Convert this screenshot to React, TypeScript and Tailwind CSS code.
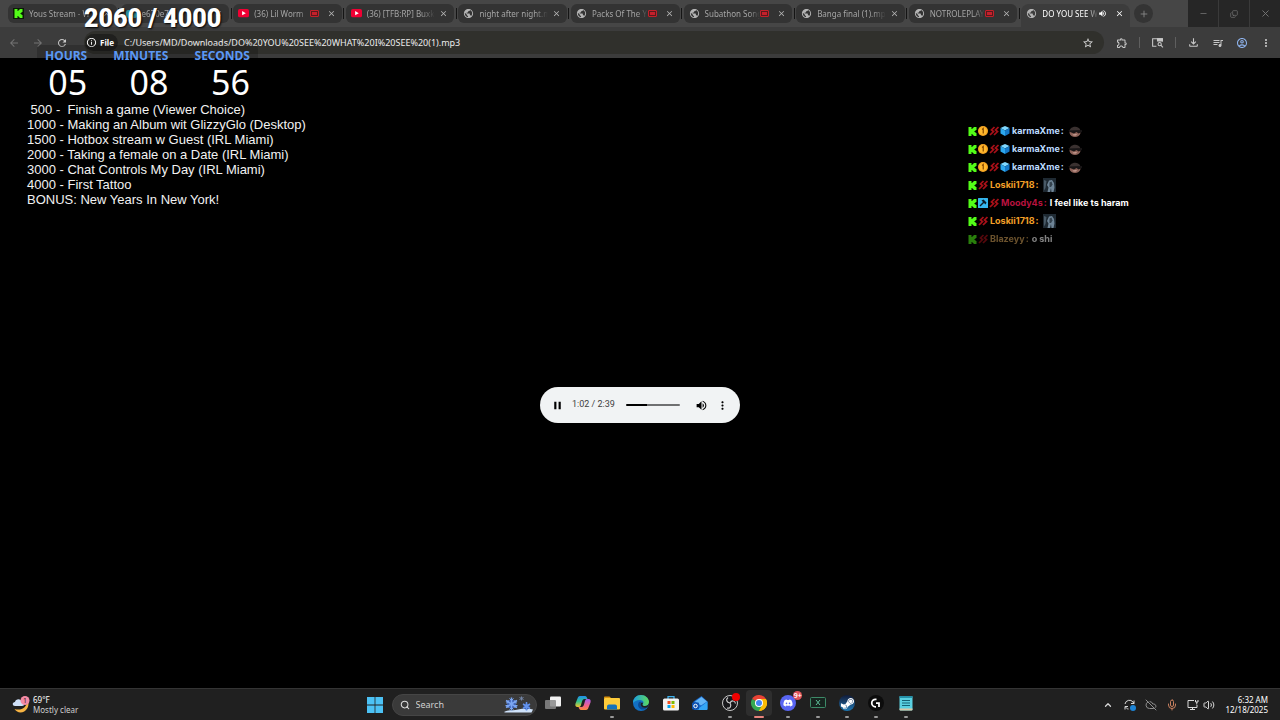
import React, { useState } from 'react';
import {
  MdArrowBack,
  MdArrowForward,
  MdClose,
  MdInfoOutline,
  MdMoreVert,
  MdOutlineAccountCircle,
  MdOutlineExtension,
  MdOutlineFileDownload,
  MdPause,
  MdPublic,
  MdQueueMusic,
  MdRefresh,
  MdStarBorder,
  MdVolumeUp,
} from 'react-icons/md';
import { FaDiscord, FaSteamSymbol } from 'react-icons/fa';
import { ChevronUp, CloudOff, Copy, Mic, Minus, Plus, Search, Volume2, X } from 'lucide-react';

type TabIcon = 'kick' | 'file' | 'youtube' | 'globe';

type Tab = {
  title: string;
  icon: TabIcon;
  live?: boolean;
  active?: boolean;
};

const tabs: Tab[] = [
  { title: 'Yous Stream - W', icon: 'kick' },
  { title: 'e670e7', icon: 'file' },
  { title: '(36) Lil Worm', icon: 'youtube', live: true },
  { title: '(36) [TFB:RP] Buxks', icon: 'youtube' },
  { title: 'night after night.m', icon: 'globe' },
  { title: 'Packs Of The Y', icon: 'globe', live: true },
  { title: 'Subathon Song', icon: 'globe', live: true },
  { title: 'Banga final (1).mp', icon: 'globe' },
  { title: 'NOTROLEPLAY', icon: 'globe', live: true },
  { title: 'DO YOU SEE W', icon: 'globe', active: true },
];

const goals = [
  '\u00a0500 -\u00a0 Finish a game (Viewer Choice)',
  '1000 - Making an Album wit GlizzyGlo (Desktop)',
  '1500 - Hotbox stream w Guest (IRL Miami)',
  '2000 - Taking a female on a Date (IRL Miami)',
  '3000 - Chat Controls My Day (IRL Miami)',
  '4000 - First Tattoo',
  'BONUS: New Years In New York!',
];

type Message = {
  user: string;
  color: string;
  badges: string[];
  text?: string;
  emote?: 'face' | 'statue';
  faded?: boolean;
};

const messages: Message[] = [
  { user: 'karmaXme', color: 'text-[#bcdcff]', badges: ['kick', 'coin', 'sub', 'cube'], emote: 'face' },
  { user: 'karmaXme', color: 'text-[#bcdcff]', badges: ['kick', 'coin', 'sub', 'cube'], emote: 'face' },
  { user: 'karmaXme', color: 'text-[#bcdcff]', badges: ['kick', 'coin', 'sub', 'cube'], emote: 'face' },
  { user: 'Loskii1718', color: 'text-[#f5a028]', badges: ['kick', 'sub'], emote: 'statue' },
  { user: 'Moody4s', color: 'text-[#b8123f]', badges: ['kick', 'mod', 'sub'], text: 'I feel like ts haram' },
  { user: 'Loskii1718', color: 'text-[#f5a028]', badges: ['kick', 'sub'], emote: 'statue' },
  { user: 'Blazeyy', color: 'text-[#d6a45a]', badges: ['kick', 'sub'], text: 'o shi', faded: true },
];

function KickLogo({ className }: { className?: string }) {
  return (
    <svg viewBox="0 0 24 24" className={className} fill="#53fc18">
      <path d="M1.333 0h8v5.333H12V2.667h2.667V0h8v8H20v2.667h-2.667v2.666H20V16h2.667v8h-8v-2.667H12v-2.666H9.333V24h-8Z" />
    </svg>
  );
}

function YoutubeLogo() {
  return (
    <svg viewBox="0 0 24 18" className="w-[11px] shrink-0">
      <rect width="24" height="18" rx="4" fill="#f00033" />
      <path d="M9 4.5v9l8-4.5z" fill="#fff" />
    </svg>
  );
}

function TabFavicon({ icon }: { icon: TabIcon }) {
  if (icon === 'kick') {
    return (
      <span className="flex size-[11px] shrink-0 items-center justify-center bg-[#0b1a06]">
        <KickLogo className="size-[9px]" />
      </span>
    );
  }
  if (icon === 'youtube') return <YoutubeLogo />;
  if (icon === 'file') return <span className="h-2 w-[11px] shrink-0 rounded-xs bg-[#2b8f9c]" />;
  return <MdPublic className="size-[11px] shrink-0 text-[#b5b5b5]" />;
}

function BrowserTab({ tab }: { tab: Tab }) {
  return (
    <div
      role="tab"
      aria-selected={!!tab.active}
      className={`flex min-w-0 flex-1 items-center pr-1.5 pl-[5px] ${
        tab.active ? 'h-[23px] rounded-t-lg bg-[#3c3c3c] pb-1' : 'h-[19px] rounded-md bg-[#333333]'
      }`}
    >
      <TabFavicon icon={tab.icon} />
      <span
        className={`ml-[5px] min-w-0 flex-1 overflow-hidden text-[8px] whitespace-nowrap [mask-image:linear-gradient(to_right,black_80%,transparent)] ${
          tab.active ? 'text-white' : 'text-[#a5a5a5]'
        }`}
      >
        {tab.title}
      </span>
      {tab.live && (
        <span className="mr-1 flex h-[7px] w-[9px] shrink-0 items-center justify-center rounded-[1px] border border-[#c4202b] bg-[#571a1d]">
          <span className="h-[3px] w-[5px] bg-[#c4202b]" />
        </span>
      )}
      {tab.active && <MdVolumeUp className="mr-1 size-[9px] shrink-0 text-white" />}
      <button type="button" aria-label="Close tab" className="ml-1 shrink-0">
        <MdClose className={`size-[9px] ${tab.active ? 'text-white' : 'text-[#b5b5b5]'}`} />
      </button>
    </div>
  );
}

function TabStrip() {
  return (
    <div className="flex h-[27px] bg-[#464646]">
      <div role="tablist" className="flex min-w-0 flex-1 items-start pt-1 pl-2">
        {tabs.map((tab, i) => (
          <React.Fragment key={tab.title}>
            {i > 0 && (
              <span className="flex h-[19px] w-1 shrink-0 items-center justify-center">
                <span className="h-[11px] w-px bg-[#151515]" />
              </span>
            )}
            <BrowserTab tab={tab} />
          </React.Fragment>
        ))}
      </div>
      <div className="w-[58px] shrink-0 pt-1 pl-1">
        <button
          type="button"
          aria-label="New tab"
          className="flex size-[19px] items-center justify-center rounded-full bg-[#343434] text-[#8c8c8c]"
        >
          <Plus className="size-[10px]" />
        </button>
      </div>
      <div className="flex shrink-0 gap-px bg-[#3a3a3a] text-[#777777]">
        <button type="button" aria-label="Minimize" className="flex w-[30px] items-center justify-center bg-[#262626]">
          <Minus className="size-[9px]" />
        </button>
        <button type="button" aria-label="Restore" className="flex w-[30px] items-center justify-center bg-[#262626]">
          <Copy className="size-2 -scale-x-100 rotate-180" />
        </button>
        <button type="button" aria-label="Close" className="flex w-[30px] items-center justify-center bg-[#262626]">
          <X className="size-[11px]" />
        </button>
      </div>
    </div>
  );
}

function Toolbar() {
  const [url, setUrl] = useState('C:/Users/MD/Downloads/DO%20YOU%20SEE%20WHAT%20I%20SEE%20(1).mp3');

  return (
    <div className="flex h-[31px] items-center bg-[#3c3c3c] pr-2 pl-2">
      <div className="flex w-[76px] shrink-0 items-center gap-3">
        <button type="button" aria-label="Back">
          <MdArrowBack className="size-3 text-[#727272]" />
        </button>
        <button type="button" aria-label="Forward">
          <MdArrowForward className="size-3 text-[#727272]" />
        </button>
        <button type="button" aria-label="Reload">
          <MdRefresh className="size-3 text-[#c9c9c9]" />
        </button>
      </div>
      <div className="flex h-[23px] min-w-0 flex-1 items-center rounded-full bg-[#30302c] pr-[10px] pl-px">
        <button
          type="button"
          className="flex h-[17px] shrink-0 items-center gap-[3px] rounded-full bg-[#20201e] pr-1 pl-px text-[8px] font-bold text-white"
        >
          <MdInfoOutline className="size-[11px]" />
          File
        </button>
        <input
          aria-label="Address"
          value={url}
          onChange={(e) => setUrl(e.target.value)}
          className="ml-1.5 min-w-0 flex-1 bg-transparent text-[9px] text-[#ececec] outline-none"
        />
        <button type="button" aria-label="Bookmark">
          <MdStarBorder className="size-3 text-[#d8d8d8]" />
        </button>
      </div>
      <div className="flex shrink-0 items-center pl-3 text-[#c8c8c8]">
        <button type="button" aria-label="Extensions">
          <MdOutlineExtension className="size-3" />
        </button>
        <span className="mx-[11px] h-[11px] w-px bg-[#5f5f5f]" />
        <button type="button" aria-label="Search this page">
          <svg viewBox="0 0 24 24" className="size-[13px]" fill="none" stroke="currentColor" strokeWidth="2">
            <path d="M10 19H3V5h18v5" />
            <path d="M12 5h9v4h-9z" fill="currentColor" />
            <circle cx="16" cy="15" r="3" />
            <path d="M18 17l4 4" />
          </svg>
        </button>
        <span className="mx-[11px] h-[11px] w-px bg-[#5f5f5f]" />
        <div className="flex items-center gap-3">
          <button type="button" aria-label="Downloads">
            <MdOutlineFileDownload className="size-[13px]" />
          </button>
          <button type="button" aria-label="Media controls">
            <MdQueueMusic className="size-3" />
          </button>
          <button type="button" aria-label="Profile">
            <MdOutlineAccountCircle className="size-3 text-[#8fb4ee]" />
          </button>
          <button type="button" aria-label="Menu">
            <MdMoreVert className="size-3" />
          </button>
        </div>
      </div>
    </div>
  );
}

function AudioPlayer() {
  const duration = 159;
  const [time, setTime] = useState(62);
  const percent = (time / duration) * 100;
  const format = (s: number) => `${Math.floor(s / 60)}:${String(s % 60).padStart(2, '0')}`;

  return (
    <div className="flex h-9 w-[200px] items-center rounded-full bg-[#f1f3f4] pr-[11px] pl-[11px] text-black">
      <button type="button" aria-label="Pause">
        <MdPause className="size-[13px]" />
      </button>
      <span className="ml-2 font-['Roboto',sans-serif] text-[9px] text-[#404040]">
        {format(time)} / {format(duration)}
      </span>
      <input
        type="range"
        aria-label="Seek"
        min={0}
        max={duration}
        value={time}
        onChange={(e) => setTime(Number(e.target.value))}
        style={{ background: `linear-gradient(to right, #000 ${percent}%, #6f7071 ${percent}%)` }}
        className="ml-[11px] h-[2px] min-w-0 flex-1 appearance-none rounded-full [&::-webkit-slider-thumb]:size-0 [&::-webkit-slider-thumb]:appearance-none"
      />
      <button type="button" aria-label="Mute" className="ml-[15px]">
        <MdVolumeUp className="size-[13px]" />
      </button>
      <button type="button" aria-label="More options" className="ml-2">
        <MdMoreVert className="size-[13px]" />
      </button>
    </div>
  );
}

function Countdown() {
  const parts = [
    { label: 'HOURS', value: '05' },
    { label: 'MINUTES', value: '08' },
    { label: 'SECONDS', value: '56' },
  ];

  return (
    <div className="absolute top-[45px] left-[37px] flex w-[221px] justify-between rounded-sm bg-black/20 px-2 font-['Noto_Sans',sans-serif]">
      {parts.map((part) => (
        <div key={part.label} className="flex flex-col items-end">
          <span className="text-[12px] leading-[22px] font-bold text-[#5b98f5]">{part.label}</span>
          <span className="text-[34px] leading-[30px] text-white">{part.value}</span>
        </div>
      ))}
    </div>
  );
}

function Badge({ kind }: { kind: string }) {
  switch (kind) {
    case 'kick':
      return <KickLogo className="size-[9px]" />;
    case 'coin':
      return (
        <svg viewBox="0 0 20 20" className="size-[10px]">
          <circle cx="10" cy="10" r="10" fill="#f5a623" />
          <circle cx="10" cy="10" r="7" fill="#ffb92e" />
          <path d="M8 7l2.500-2v10" fill="none" stroke="#8a4a00" strokeWidth="2.500" />
        </svg>
      );
    case 'cube':
      return (
        <svg viewBox="0 0 20 20" className="size-[10px]">
          <path d="M10 0l9 4-9 5-9-5z" fill="#7fd8ff" />
          <path d="M1 4l9 5v11l-9-5z" fill="#2da8ee" />
          <path d="M19 4l-9 5v11l9-5z" fill="#1479c9" />
        </svg>
      );
    case 'mod':
      return (
        <svg viewBox="0 0 20 20" className="size-[10px]">
          <rect width="20" height="20" rx="1" fill="#35b6ee" />
          <path d="M4 16l8-8" stroke="#0c1b26" strokeWidth="3" />
          <path d="M7 5l4-2 6 6-2 4z" fill="#0c1b26" />
        </svg>
      );
    default:
      return (
        <svg viewBox="0 0 20 20" className="size-[10px]" fill="none" stroke="#a81018" strokeWidth="3.500">
          <path d="M11 2L5 8l4 3-7 7" />
          <path d="M19 2l-6 6 4 3-7 7" />
        </svg>
      );
  }
}

function Emote({ kind }: { kind: 'face' | 'statue' }) {
  if (kind === 'face') {
    return (
      <svg viewBox="0 0 28 24" className="ml-px h-3 w-[14px]">
        <path d="M4 10h20l1 6c-1 5-6 8-11 8S4 21 3 16z" fill="#8d6258" />
        <path d="M3 12C4 2 22 0 25 11l-5 1-12 1z" fill="#3a3130" />
        <path d="M0 11l28-1v4l-7 3-4-3-5 3-8-3z" fill="#181516" />
        <path d="M9 19l9-1-2 3h-5z" fill="#caa096" />
      </svg>
    );
  }
  return (
    <svg viewBox="0 0 26 28" className="ml-px h-[14px] w-[13px]">
      <rect width="26" height="28" fill="#1f2a33" />
      <path d="M9 28l2-9-3-5 4-9 6-1 4 6 1 9-2 9h-4l-1-8-2 8z" fill="#6e8496" />
      <path d="M13 9l4-2 2 6-3 5h-3z" fill="#34424e" />
      <path d="M2 4l5 2-2 14-3 5z" fill="#495a67" />
    </svg>
  );
}

function Chat() {
  return (
    <ul className="absolute top-[122px] left-[968px] font-['Inter',sans-serif] text-[9px] font-bold">
      {messages.map((m, i) => (
        <li key={i} className={`flex h-[18px] items-center ${m.faded ? 'opacity-50' : ''}`}>
          <span className="mr-[2px] flex items-center gap-px">
            {m.badges.map((b) => (
              <Badge key={b} kind={b} />
            ))}
          </span>
          <span className={m.color}>{m.user}</span>
          <span className={`mr-[3px] ml-px ${m.color}`}>:</span>
          {m.text && <span className="text-white">{m.text}</span>}
          {m.emote && <Emote kind={m.emote} />}
        </li>
      ))}
    </ul>
  );
}

// Taskbar app icons, in the order they are pinned
const apps: { name: string; running?: boolean; active?: boolean; icon: React.ReactNode }[] = [
  {
    name: 'Task View',
    icon: (
      <svg viewBox="0 0 32 32" className="size-4">
        <rect x="10" y="3" width="22" height="20" rx="2" fill="#f0f0f0" />
        <rect x="0" y="10" width="22" height="18" rx="2" fill="#8a8a8a" fillOpacity=".85" />
      </svg>
    ),
  },
  {
    name: 'Copilot',
    icon: (
      <svg viewBox="0 0 32 32" className="size-4">
        <defs>
          <linearGradient id="copilotA" x1="0" y1="0" x2="0" y2="1">
            <stop offset="0" stopColor="#1f8df0" />
            <stop offset=".5" stopColor="#35c58b" />
            <stop offset="1" stopColor="#f2c32c" />
          </linearGradient>
          <linearGradient id="copilotB" x1="0" y1="0" x2="0" y2="1">
            <stop offset="0" stopColor="#a45cf0" />
            <stop offset=".6" stopColor="#f2628a" />
            <stop offset="1" stopColor="#fa8b3c" />
          </linearGradient>
        </defs>
        <path d="M10 2h10c3 0 4 3 5 6h-6c-3 0-4 2-5 5l-2 7c-1 3-2 4-5 4H5c-4 0-5-3-4-7l4-10c1-3 2-5 5-5z" fill="url(#copilotA)" />
        <path d="M22 30H12c-3 0-4-3-5-6h6c3 0 4-2 5-5l2-7c1-3 2-4 5-4h2c4 0 5 3 4 7l-4 10c-1 3-2 5-5 5z" fill="url(#copilotB)" />
      </svg>
    ),
  },
  {
    name: 'File Explorer',
    running: true,
    icon: (
      <svg viewBox="0 0 32 32" className="size-4">
        <path d="M0 5c0-1 1-2 2-2h9l4 4H0z" fill="#d9920d" />
        <rect y="6" width="32" height="23" rx="2" fill="#fccb3b" />
        <path d="M6 29v-6c0-2 1-4 4-4h12c3 0 4 2 4 4v6z" fill="#1672ba" />
      </svg>
    ),
  },
  {
    name: 'Edge',
    icon: (
      <svg viewBox="0 0 32 32" className="size-4">
        <defs>
          <linearGradient id="edgeTop" x1="0" y1="0" x2="1" y2="0">
            <stop offset="0" stopColor="#1b9de2" />
            <stop offset="1" stopColor="#5edb5b" />
          </linearGradient>
        </defs>
        <circle cx="16" cy="16" r="16" fill="#1270c4" />
        <path d="M0 16C0 7 7 0 16 0s16 7 16 14c0 5-4 8-8 8-3 0-5-1-5-3 0-1 2-2 2-4 0-3-3-5-7-5C7 10 2 13 0 16z" fill="url(#edgeTop)" />
        <path d="M11 16c-3 7 3 14 10 13 3 0 6-3 7-5-8 3-14-1-13-7l2-3c-3-1-5 0-6 2z" fill="#0a4a94" />
        <path d="M19 19c0 2 2 3 5 3 4 0 8-3 8-7v4c-1 3-3 5-4 6-7 2-12-1-13-6 0-3 2-4 4-4 2 1 0 3 0 4z" fill="#202020" />
      </svg>
    ),
  },
  {
    name: 'Microsoft Store',
    icon: (
      <svg viewBox="0 0 32 32" className="size-4">
        <path d="M10 8V3h12v5" fill="none" stroke="#3fb2ee" strokeWidth="2.500" />
        <rect y="7" width="32" height="24" rx="3" fill="#f2f2f2" />
        <path d="M9 12h6v6H9z" fill="#f25022" />
        <path d="M17 12h6v6h-6z" fill="#7fba00" />
        <path d="M9 20h6v6H9z" fill="#00a4ef" />
        <path d="M17 20h6v6h-6z" fill="#ffb900" />
      </svg>
    ),
  },
  {
    name: 'Outlook',
    icon: (
      <svg viewBox="0 0 32 32" className="size-4">
        <path d="M3 13L19 2l12 11v14c0 2-1 3-3 3H7c-2 0-4-1-4-3z" fill="#1565c8" />
        <path d="M6 13L19 4l11 9-12 8z" fill="#64b5f6" />
        <path d="M31 13v14c0 2-1 3-3 3H9z" fill="#34a5f5" />
        <rect y="15" width="14" height="14" rx="2" fill="#0d4fae" />
        <circle cx="7" cy="22" r="3.500" fill="none" stroke="#fff" strokeWidth="2" />
      </svg>
    ),
  },
  {
    name: 'OBS Studio',
    running: true,
    icon: (
      <svg viewBox="0 0 32 32" className="size-4 overflow-visible">
        <circle cx="16" cy="16" r="15" fill="#17171a" stroke="#c9c9c9" strokeWidth="2" />
        <g fill="none" stroke="#c9c9c9" strokeWidth="2.500">
          <path d="M16 16c-7-1-9-7-4-11" />
          <path d="M16 16c3-6 10-5 11 1" />
          <path d="M16 16c4 6 0 12-6 10" />
        </g>
        <circle cx="28" cy="4" r="8" fill="#f00000" />
      </svg>
    ),
  },
  {
    name: 'Google Chrome',
    running: true,
    active: true,
    icon: (
      <svg viewBox="0 0 32 32" className="size-4">
        <path d="M16 16L2.140 8A16 16 0 0 1 29.860 8z" fill="#ea4335" />
        <path d="M16 16L29.860 8A16 16 0 0 1 16 32z" fill="#fbbc05" />
        <path d="M16 16v16A16 16 0 0 1 2.140 8z" fill="#34a853" />
        <path d="M16 8h13.860L23 20z" fill="#fbbc05" />
        <path d="M23 20l-7 12-7-12z" fill="#34a853" />
        <path d="M23 20l-7 12a16 16 0 0 0 13.860-24H16z" fill="#fbbc05" />
        <circle cx="16" cy="16" r="8" fill="#fff" />
        <circle cx="16" cy="16" r="6" fill="#4285f4" />
      </svg>
    ),
  },
  {
    name: 'Discord',
    running: true,
    icon: (
      <span className="relative flex size-4 items-center justify-center rounded-full bg-[#5865f2] text-white">
        <FaDiscord className="size-[10px]" />
        <span className="absolute -top-1 -right-1.5 flex size-[9px] items-center justify-center rounded-full bg-[#e0525c] text-[7px] leading-none font-semibold">
          9+
        </span>
      </span>
    ),
  },
  {
    name: 'Terminal',
    running: true,
    icon: (
      <svg viewBox="0 0 32 24" className="h-3 w-4" fill="none" stroke="#3d8a68">
        <rect x="1" y="1" width="30" height="20" rx="2" fill="#17241f" strokeWidth="2" />
        <path d="M12 6l8 10M20 6l-8 10" stroke="#5fc09a" strokeWidth="2" />
      </svg>
    ),
  },
  {
    name: 'Steam',
    running: true,
    icon: (
      <span className="flex size-4 items-center justify-center rounded-full bg-linear-to-b from-[#101c3a] to-[#1b78b4] text-white">
        <FaSteamSymbol className="size-[15px]" />
      </span>
    ),
  },
  {
    name: 'Logitech G HUB',
    running: true,
    icon: (
      <svg viewBox="0 0 32 32" className="size-4" fill="none">
        <circle cx="16" cy="16" r="16" fill="#0c0c0c" />
        <path d="M17 8.500h-2a7.500 7.500 0 0 0 0 15h1" stroke="#fff" strokeWidth="3.500" />
        <path d="M16 16h6v8" stroke="#fff" strokeWidth="3.500" />
      </svg>
    ),
  },
  {
    name: 'Notepad',
    running: true,
    icon: (
      <svg viewBox="0 0 28 32" className="h-4 w-[14px]">
        <rect x="1" y="2" width="26" height="29" rx="2" fill="#5ad0e0" />
        <path d="M1 27h26v2c0 1-1 2-2 2H3c-1 0-2-1-2-2z" fill="#d9c7a6" />
        <path d="M1 2h26v4H1z" fill="#2590a8" />
        <path d="M6 11h16M6 16h16M6 21h16" stroke="#146274" strokeWidth="2" />
      </svg>
    ),
  },
];

function WeatherWidget() {
  return (
    <button type="button" className="flex items-center gap-px text-left text-[8px] leading-[10px] text-white">
      <svg viewBox="0 0 40 36" className="h-[18px] w-5">
        <path d="M32 9c4 12-4 24-15 24-5 0-9-3-12-7 14 4 24-3 27-17z" fill="#f7b443" />
        <path d="M6 20c-6 0-6-8 0-8 1-7 12-8 14 0 6 0 6 8 0 8z" fill="#cfe0f7" />
        <circle cx="26" cy="9" r="9" fill="#f48ba6" />
        <text x="26" y="14" fontSize="14" textAnchor="middle" fill="#3a1620">
          1
        </text>
      </svg>
      <span className="flex flex-col">
        <span>69°F</span>
        <span className="text-[#cfcfcf]">Mostly clear</span>
      </span>
    </button>
  );
}

function SearchBox() {
  return (
    <label className="ml-[2px] flex h-[22px] w-[145px] items-center rounded-full border border-[#454545] bg-[#3a3a3a] pr-[2px] pl-[7px]">
      <Search className="size-[10px] shrink-0 text-[#dddddd]" strokeWidth={2.5} />
      <input
        type="text"
        aria-label="Search"
        placeholder="Search"
        className="ml-[6px] min-w-0 flex-1 bg-transparent text-[9px] outline-none placeholder:text-[#cfcfcf]"
      />
      <svg viewBox="0 0 60 36" className="h-[18px] w-[30px] shrink-0" fill="none">
        <path d="M0 32c10-6 18-2 28-5 10-2 20-3 30 0l-3 6H2z" fill="#cfe2fa" />
        <circle cx="15" cy="16" r="9" fill="#3f62b4" />
        <circle cx="45" cy="21" r="6" fill="#2f55ae" />
        <g stroke="#7ba6f2" strokeWidth="3">
          <path d="M15 3v26M4 9l22 14M26 9L4 23" />
          <path d="M11 5l4 4 4-4M11 27l4-4 4 4M4 14l5-1-1-5M22 24l0-5 5 0M26 14l-5-1 1-5M8 24l0-5-5 0" strokeWidth="2" />
        </g>
        <g stroke="#6594ea" strokeWidth="3">
          <path d="M45 12v17M38 16l14 9M52 16l-14 9" />
        </g>
        <path d="M35 1v8M31 3l8 4M39 3l-8 4" stroke="#7386a8" strokeWidth="2" />
      </svg>
    </label>
  );
}

function SystemTray() {
  return (
    <div className="flex flex-1 items-center justify-end pr-3 text-[#d8d8d8]">
      <button type="button" aria-label="Hidden icons">
        <ChevronUp className="size-[10px]" strokeWidth={3} />
      </button>
      <svg viewBox="0 0 24 24" className="ml-[11px] size-3" fill="none" stroke="currentColor" strokeWidth="2">
        <path d="M2 10a9 9 0 0 1 16-4l2 3M20 3v6h-6M2 21v-6h6M3 15c1 3 3 5 6 5" />
        <circle cx="18" cy="18" r="6" fill="#1d83d4" stroke="none" />
      </svg>
      <CloudOff className="ml-[9px] size-3 text-[#8f8f8f]" />
      <Mic className="ml-[9px] size-3 text-[#c9805f]" />
      <svg viewBox="0 0 24 24" className="ml-[9px] size-3" fill="none" stroke="currentColor" strokeWidth="2">
        <path d="M14 3H2v14h18v-5M6 21h10M11 17v4" />
        <path d="M17 2v4h5V2M19.500 6v5" />
      </svg>
      <Volume2 className="ml-1 size-3" />
      <div className="ml-[10px] text-right text-[8px] leading-[10px] text-white">
        <div>6:32 AM</div>
        <div>12/18/2025</div>
      </div>
    </div>
  );
}

function Taskbar() {
  return (
    <footer className="flex h-8 items-stretch border-t border-[#343434] bg-[#202020]">
      <div className="flex flex-1 items-center pl-3">
        <WeatherWidget />
      </div>
      <div className="flex items-center">
        <button type="button" aria-label="Start" className="flex w-[30px] items-center justify-center">
          <svg viewBox="0 0 16 16" className="size-4" fill="#4cc2f5">
            <path d="M0 0h7.600v7.600H0zM8.400 0H16v7.600H8.400zM0 8.400h7.600V16H0zM8.400 8.400H16V16H8.400z" />
          </svg>
        </button>
        <SearchBox />
        <nav className="ml-[2px] flex h-full w-[382px]">
          {apps.map((app) => (
            <button
              key={app.name}
              type="button"
              aria-label={app.name}
              className="flex min-w-0 flex-1 flex-col items-center justify-end"
            >
              <span
                className={`flex h-[26px] w-[26px] items-center justify-center rounded-sm ${
                  app.active ? 'bg-[#2e2e2e]' : ''
                }`}
              >
                {app.icon}
              </span>
              <span
                className={`mb-[2px] h-[2px] rounded-full ${
                  app.active ? 'w-[10px] bg-[#e8837c]' : app.running ? 'w-1 bg-[#9a9a9a]' : 'w-1'
                }`}
              />
            </button>
          ))}
        </nav>
      </div>
      <SystemTray />
    </footer>
  );
}

function App() {
  return (
    <div className="relative flex min-h-screen flex-col overflow-hidden bg-black font-['Noto_Sans',sans-serif]">
      <header>
        <TabStrip />
        <Toolbar />
      </header>

      <main className="flex flex-1 items-center justify-center pt-16">
        <AudioPlayer />
      </main>

      <Taskbar />

      {/* Stream overlays */}
      <div className="absolute top-0 left-[84px] font-['Roboto',sans-serif] text-[25px] leading-[38px] font-black whitespace-nowrap text-white [text-shadow:1px_1px_2px_#000]">
        2060 / 4000
      </div>
      <Countdown />
      <ul className="absolute top-[102px] left-[27px] font-['Liberation_Sans',Arial,sans-serif] text-[13px] leading-[15px] whitespace-nowrap text-[#f2f2f2]">
        {goals.map((goal) => (
          <li key={goal}>{goal}</li>
        ))}
      </ul>
      <Chat />
    </div>
  );
}

export default App;
